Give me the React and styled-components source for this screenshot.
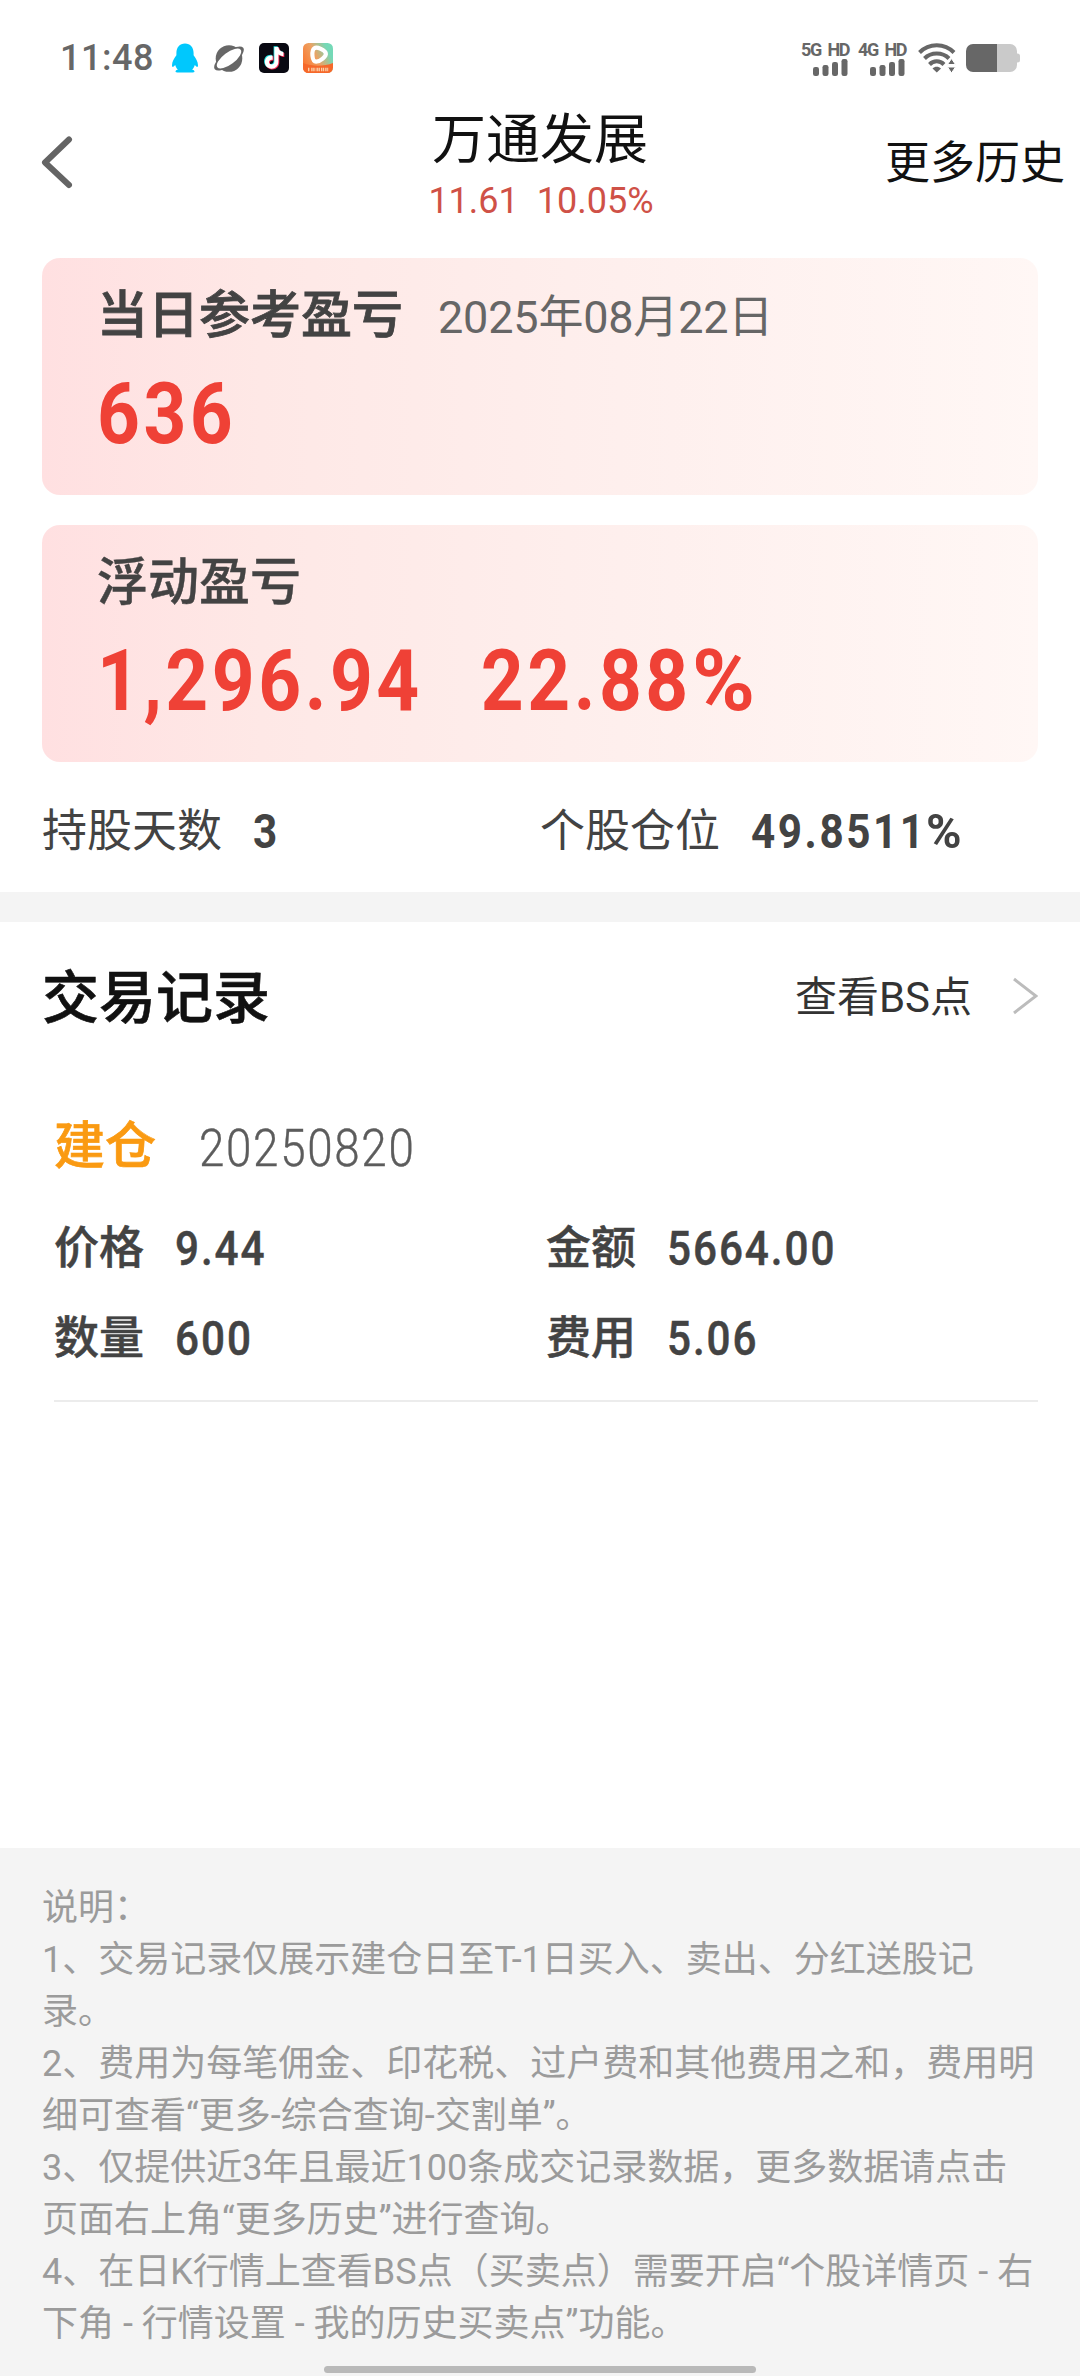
import React from "react";
import styled, { createGlobalStyle } from "styled-components";

const GlobalStyle = createGlobalStyle`
  * {
    box-sizing: border-box;
  }
  body {
    margin: 0;
    background: #fff;
    font-family: Roboto, "Noto Sans CJK SC", sans-serif;
    color: #434343;
  }
  svg {
    display: block;
    flex-shrink: 0;
  }
`;

const Page = styled.div`
  width: 1080px;
  height: 2376px;
  display: flex;
  flex-direction: column;
  overflow: hidden;
`;

const StatusBar = styled.div`
  height: 90px;
  padding: 26px 60px 0 60px;
  display: flex;
  justify-content: space-between;
`;

const StatusGroup = styled.div`
  display: flex;
  align-items: center;
  height: 64px;
`;

const Clock = styled.span`
  width: 111px;
  font-size: 36px;
  font-weight: 500;
  line-height: 64px;
  letter-spacing: 0.5px;
  color: #676767;
`;

const AppIcons = styled.div`
  display: flex;
  gap: 14px;
`;

const Signal = styled.div`
  width: 47px;
  margin-right: 10px;
  display: flex;
  flex-direction: column;
  align-items: flex-end;

  & + svg {
    margin-left: 3px;
  }
`;

const SignalLabel = styled.div`
  width: 48px;
  margin-right: -1px;
  display: flex;
  justify-content: space-between;
  font-size: 18px;
  font-weight: 700;
  line-height: 18px;
  letter-spacing: -1.4px;
  color: #676767;
`;

const Battery = styled.div`
  margin-left: 10px;
`;

const NavBar = styled.div`
  height: 168px;
  display: grid;
  grid-template-columns: 300px 1fr 300px;
`;

const BackButton = styled.div`
  padding: 45px 0 0 41px;
`;

const TitleBox = styled.div`
  text-align: center;
`;

const Title = styled.div`
  margin-top: 13px;
  font-size: 54px;
  line-height: 76px;
  color: #111;
`;

const Quote = styled.div`
  display: flex;
  justify-content: center;
  gap: 18px;
  padding-left: 2px;
  font-size: 36px;
  line-height: 44px;
  color: #cf5147;
`;

const MoreLink = styled.div`
  padding: 44px 15px 0 0;
  text-align: right;
  font-size: 45px;
  line-height: 60px;
  color: #111;
`;

const Card = styled.div`
  height: 237px;
  margin: 0 42px 30px;
  padding: 23px 55px 0;
  border-radius: 18px;
  background: linear-gradient(90deg, #ffe0e1 0%, #fee8e6 22%, #feefed 58%, #fff7f5 100%);
`;

const CardHead = styled.div`
  display: flex;
  align-items: baseline;
  gap: 35px;
  height: 73px;
  line-height: 70px;
`;

const CardTitle = styled.div`
  font-size: 51px;
  font-weight: 500;
  -webkit-text-stroke: ${(p) => (p.$strong ? 0.8 : 0.4)}px currentColor;
`;

const CardDate = styled.div`
  font-size: 45px;
  letter-spacing: -0.2px;
  color: #666;
`;

/* digits are squeezed a bit to get the narrow look of a DIN face */
const Digits = styled.div`
  display: flex;
  transform: scaleX(0.88);
  transform-origin: left center;
`;

const CardNumbers = styled(Digits)`
  gap: 66px;
  font-size: 85px;
  font-weight: 700;
  line-height: 120px;
  letter-spacing: 4px;
  color: #ef4136;
`;

const Percent = styled.span`
  display: inline-block;
  transform: scaleX(1.14);
  transform-origin: left center;
`;

const Holding = styled.div`
  height: 100px;
  padding: 0 42px;
  display: grid;
  grid-template-columns: 498px 1fr;
`;

const HoldingItem = styled.div`
  display: flex;
  align-items: center;
  height: 76px;
  gap: 31px;
  font-size: 45px;
  line-height: 66px;
  padding-top: 3px;
`;

const HoldingValue = styled(Digits)`
  font-size: 48px;
  font-weight: 700;
  letter-spacing: 2.9px;
`;

const Divider = styled.div`
  height: 30px;
  background: #f4f4f4;
`;

const SectionHead = styled.div`
  height: 150px;
  padding: 0 42px;
  display: flex;
  align-items: center;
  justify-content: space-between;
`;

const SectionTitle = styled.div`
  padding-top: 4px;
  font-size: 57px;
  font-weight: 500;
  line-height: 80px;
  color: #111;
  -webkit-text-stroke: 0.6px currentColor;
`;

const ViewLink = styled.div`
  display: flex;
  align-items: center;
  gap: 40px;
  padding-top: 2px;
  font-size: 42px;
  line-height: 60px;
  color: #333;

  svg {
    margin-bottom: 5px;
  }
`;

const Record = styled.div`
  margin: 30px 42px 0 54px;
  height: 300px;
  border-bottom: 2px solid #ececec;
`;

const RecordHead = styled.div`
  display: flex;
  align-items: center;
  height: 80px;
  gap: 43px;
`;

const RecordType = styled.div`
  font-size: 51px;
  font-weight: 500;
  color: #fa9a12;
  -webkit-text-stroke: 0.7px currentColor;
`;

const RecordDate = styled(Digits)`
  padding-top: 12px;
  font-size: 52px;
  font-weight: 300;
  letter-spacing: 1.9px;
  color: #5c5c5c;
  -webkit-text-stroke: 0.4px currentColor;
`;

const Fields = styled.div`
  margin-top: 22px;
  display: grid;
  grid-template-columns: 492px 1fr;
  grid-auto-rows: 90px;
`;

const Field = styled.div`
  display: flex;
  align-items: center;
  gap: 31px;
  font-size: 45px;
  font-weight: 500;
  line-height: 66px;
  -webkit-text-stroke: 0.5px currentColor;
`;

const FieldValue = styled(Digits)`
  font-size: 48px;
  letter-spacing: 2.2px;
`;

const Notes = styled.div`
  margin-top: auto;
  height: 528px;
  padding: 34px 42px 0;
  display: flex;
  flex-direction: column;
  background: #f4f4f4;
  font-size: 36px;
  line-height: 52px;
  color: #9b9b9b;
  white-space: nowrap;
`;

const HomeBar = styled.div`
  width: 432px;
  height: 7px;
  margin: auto auto 3px;
  border-radius: 4px;
  background: #b9b9b9;
`;

const records = [
  {
    type: "建仓",
    date: "20250820",
    fields: [
      ["价格", "9.44"],
      ["金额", "5664.00"],
      ["数量", "600"],
      ["费用", "5.06"],
    ],
  },
];

const notes = [
  "说明：",
  "1、交易记录仅展示建仓日至T-1日买入、卖出、分红送股记",
  "录。",
  "2、费用为每笔佣金、印花税、过户费和其他费用之和，费用明",
  "细可查看“更多-综合查询-交割单”。",
  "3、仅提供近3年且最近100条成交记录数据，更多数据请点击",
  "页面右上角“更多历史”进行查询。",
  "4、在日K行情上查看BS点（买卖点）需要开启“个股详情页 - 右",
  "下角 - 行情设置 - 我的历史买卖点”功能。",
];

const PenguinIcon = () => (
  <svg width="28" height="30" viewBox="0 0 28 30" fill="#00c8fd">
    <path d="M14 0.5C8.6 0.5 5.4 4.5 5.4 10v2.2C3.3 15 1 18.6 1 22.3c0 1.7.8 2 1.7 1.2l1.5-1.6c.5 1.9 1.4 3.4 2.7 4.6-1.5.5-2.4 1.1-2.4 2 0 .8 1 1 3 1h13c2 0 3-.2 3-1 0-.9-.9-1.5-2.4-2 1.3-1.2 2.2-2.7 2.7-4.6l1.5 1.6c.9.8 1.7.5 1.7-1.2 0-3.7-2.3-7.3-4.4-10.1V10C22.6 4.5 19.4.5 14 .5z" />
  </svg>
);

const PlanetIcon = () => (
  <svg width="32" height="30" viewBox="0 0 32 30">
    <circle cx="16" cy="15.5" r="13.3" fill="#676767" />
    <ellipse cx="16" cy="15.5" rx="17.8" ry="7" transform="rotate(-37 16 15.5)" fill="#676767" />
    <ellipse cx="16" cy="15.5" rx="14.6" ry="6" transform="rotate(-37 16 15.5)" fill="#fff" />
  </svg>
);

const NotePath = "M16.5 5h4c.3 3 2 4.8 5 5.1v4c-1.9 0-3.6-.6-5-1.5v7.2c0 4.2-3 6.9-6.8 6.9-3.9 0-6.7-3-6.7-6.6 0-4.1 3.4-7 7.7-6.5v4.2c-1.9-.5-3.6.6-3.6 2.3 0 1.500 1.100 2.500 2.600 2.500 1.700 0 2.800-1.100 2.800-3V5z";

const TiktokIcon = () => (
  <svg width="30" height="30" viewBox="0 0 30 30">
    <rect width="30" height="30" rx="5" fill="#090912" />
    <path d={NotePath} fill="#25e6e6" transform="translate(-1.9 -1.7)" />
    <path d={NotePath} fill="#f72b55" transform="translate(-.2 -.2)" />
    <path d={NotePath} fill="#fff" transform="translate(-1.1 -1)" />
  </svg>
);

const VideoIcon = () => (
  <svg width="30" height="30" viewBox="0 0 30 30">
    <defs>
      <linearGradient id="videoBg" x1="0" y1=".7" x2="1" y2=".2">
        <stop offset="0" stopColor="#fb762f" />
        <stop offset=".45" stopColor="#eda263" />
        <stop offset=".85" stopColor="#74d9b7" />
      </linearGradient>
      <clipPath id="videoClip">
        <rect width="30" height="30" rx="5.5" />
      </clipPath>
    </defs>
    <g clipPath="url(#videoClip)">
      <rect width="30" height="30" fill="url(#videoBg)" />
      <path d="M0 20c9 3.5 21 3.5 30 0v10H0z" fill="#f6682a" />
      <path
        d="M11.5 5.2c2.5-1.8 10.5 2 11.3 5 .8 3.2-5.7 8.4-9.7 8.4-4.2 0-5-10.8-1.6-13.4z"
        fill="none"
        stroke="#fff"
        strokeWidth="4.2"
      />
      <path d="M5 26.5h2m1.2 0h4.3m1 0H17m1 0h3.2m1 0h3" stroke="#fbd0a8" strokeWidth="3.4" strokeDasharray="1.4 .6" />
    </g>
  </svg>
);

const SignalBars = () => (
  <svg width="36" height="17" viewBox="0 0 36 17" fill="#676767">
    <rect x="1" y="8" width="6" height="9" rx="2.2" />
    <rect x="10.5" y="6" width="6" height="11" rx="2.2" />
    <rect x="20" y="3" width="6" height="14" rx="2.2" />
    <rect x="29.5" y="0" width="6" height="17" rx="2.2" />
  </svg>
);

const WifiIcon = () => (
  <svg width="38" height="30" viewBox="0 0 38 30" fill="none" stroke="#676767" strokeWidth="4">
    <path d="M1.5 9.5C11 -.2 26.5 -.2 36 9.5" />
    <path d="M6.5 15.5c6.5-6.6 18-6.6 24.5 0" />
    <path d="M11.5 21.5c4-4.2 10.5-4.2 14.5 0" />
    <path d="M14.5 25.5c2.4-2.4 6-2.4 8.5 0l-4.25 4z" fill="#676767" stroke="none" />
    <path d="M33.5 15.5l4 6h-8zM33.5 30l4-6h-8z" fill="#676767" stroke="#fff" strokeWidth="1" />
  </svg>
);

const BatteryIcon = () => (
  <svg width="54" height="28" viewBox="0 0 54 28">
    <path d="M31 0h13a7 7 0 0 1 7 7v2.5h.5a2.5 2.5 0 0 1 2.5 2.5v4a2.5 2.5 0 0 1-2.5 2.5H51V21a7 7 0 0 1-7 7H31z" fill="#cacaca" />
    <path d="M7 0h24v28H7a7 7 0 0 1-7-7V7a7 7 0 0 1 7-7z" fill="#676767" />
  </svg>
);

const MobileSignal = ({ network }) => (
  <Signal>
    <SignalLabel>
      <span>{network}</span>
      <span>HD</span>
    </SignalLabel>
    <SignalBars />
  </Signal>
);

const App = () => {
  return (
    <Page>
      <GlobalStyle />
      <StatusBar>
        <StatusGroup>
          <Clock>11:48</Clock>
          <AppIcons>
            <PenguinIcon />
            <PlanetIcon />
            <TiktokIcon />
            <VideoIcon />
          </AppIcons>
        </StatusGroup>
        <StatusGroup>
          <MobileSignal network="5G" />
          <MobileSignal network="4G" />
          <WifiIcon />
          <Battery>
            <BatteryIcon />
          </Battery>
        </StatusGroup>
      </StatusBar>

      <NavBar>
        <BackButton>
          <svg width="32" height="54" viewBox="0 0 32 54" fill="none" stroke="#646464" strokeWidth="6" strokeLinecap="round" strokeLinejoin="round">
            <path d="M28 4.5L4 27.5 28 50" />
          </svg>
        </BackButton>
        <TitleBox>
          <Title>万通发展</Title>
          <Quote>
            <span>11.61</span>
            <span>10.05%</span>
          </Quote>
        </TitleBox>
        <MoreLink>更多历史</MoreLink>
      </NavBar>

      <Card>
        <CardHead>
          <CardTitle $strong>当日参考盈亏</CardTitle>
          <CardDate>2025年08月22日</CardDate>
        </CardHead>
        <CardNumbers>636</CardNumbers>
      </Card>
      <Card>
        <CardHead>
          <CardTitle>浮动盈亏</CardTitle>
        </CardHead>
        <CardNumbers>
          <span>1,296.94</span>
          <span>
            22.88<Percent>%</Percent>
          </span>
        </CardNumbers>
      </Card>

      <Holding>
        <HoldingItem>
          持股天数
          <HoldingValue>3</HoldingValue>
        </HoldingItem>
        <HoldingItem>
          个股仓位
          <HoldingValue>
            49.8511<Percent>%</Percent>
          </HoldingValue>
        </HoldingItem>
      </Holding>
      <Divider />

      <SectionHead>
        <SectionTitle>交易记录</SectionTitle>
        <ViewLink>
          查看BS点
          <svg width="26" height="38" viewBox="0 0 26 38" fill="none" stroke="#bcbcbc" strokeWidth="3">
            <path d="M2 2l22 17L2 36" />
          </svg>
        </ViewLink>
      </SectionHead>

      {records.map((record) => (
        <Record key={record.date}>
          <RecordHead>
            <RecordType>{record.type}</RecordType>
            <RecordDate>{record.date}</RecordDate>
          </RecordHead>
          <Fields>
            {record.fields.map(([label, value]) => (
              <Field key={label}>
                {label}
                <FieldValue>{value}</FieldValue>
              </Field>
            ))}
          </Fields>
        </Record>
      ))}

      <Notes>
        {notes.map((line) => (
          <div key={line}>{line}</div>
        ))}
        <HomeBar />
      </Notes>
    </Page>
  );
};

export default App;
